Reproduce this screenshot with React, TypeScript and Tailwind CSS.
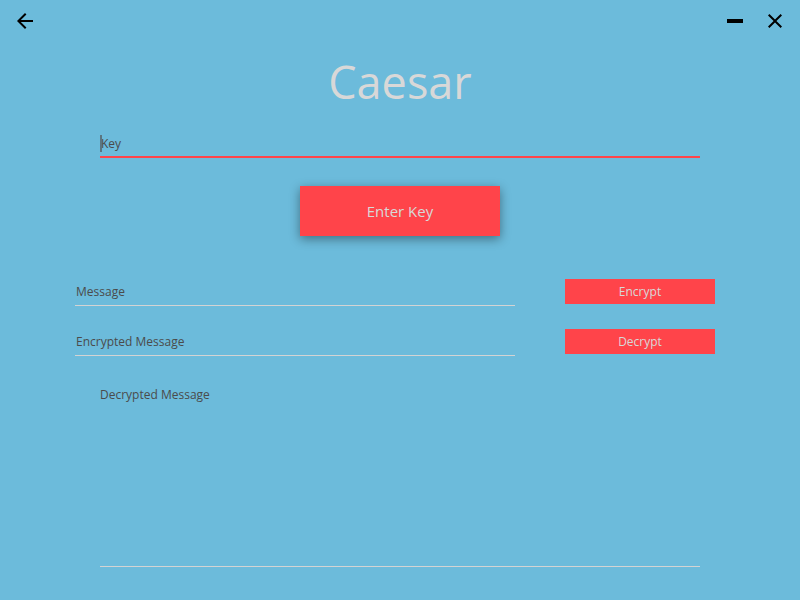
import React from "react";

type MessageRowProps = {
  id: string;
  label: string;
  action: string;
};

function MessageRow({ id, label, action }: MessageRowProps) {
  return (
    <div className="flex h-[27px] items-start gap-[50px]">
      <input
        id={id}
        type="text"
        aria-label={label}
        placeholder={label}
        className="h-[27px] min-w-0 flex-1 border-b border-[#d3d3d3] bg-transparent px-px pb-0.5 text-xs text-[#4b4b4b] outline-none placeholder:text-[#4b4b4b] placeholder:opacity-100"
      />
      <button
        type="button"
        className="h-[25px] w-[150px] bg-[#ff444a] text-xs text-[#d8d8d8]"
      >
        {action}
      </button>
    </div>
  );
}

export default function App() {
  return (
    <div className="flex min-h-screen flex-col bg-[#6cbbdb] font-['Open_Sans','Noto_Sans',sans-serif]">
      <header className="flex h-[42px] items-center justify-between px-[13px]">
        <button type="button" aria-label="Back" className="flex size-6 items-center justify-center">
          <svg viewBox="0 0 24 24" className="size-6" fill="#000">
            <path d="M20 11H7.83l5.59-5.59L12 4l-8 8 8 8 1.41-1.41L7.83 13H20v-2z" />
          </svg>
        </button>
        <div className="flex gap-4">
          <button type="button" aria-label="Minimize" className="flex size-6 items-center justify-center">
            <svg viewBox="0 0 24 24" className="size-6" fill="#000">
              <path d="M4 10h16v4H4z" />
            </svg>
          </button>
          <button type="button" aria-label="Close" className="flex size-6 items-center justify-center">
            <svg viewBox="0 0 24 24" className="size-6" fill="#000">
              <path d="M19 6.41L17.59 5 12 10.59 6.41 5 5 6.41 10.59 12 5 17.59 6.41 19 12 13.41 17.59 19 19 17.59 13.41 12z" />
            </svg>
          </button>
        </div>
      </header>

      <main className="flex flex-1 flex-col">
        <h1 className="text-center text-[45px] leading-20 text-[#d8d8d8]">Caesar</h1>

        <form className="flex flex-col items-center px-[100px] pt-[9px]">
          <div className="relative w-full">
            <span className="absolute top-1 left-0 h-[17px] w-0.5 bg-[#5b7681]" />
            <input
              id="key"
              type="text"
              aria-label="Key"
              placeholder="Key"
              className="block h-[27px] w-full border-b-2 border-[#ff444a] bg-transparent px-px text-xs text-[#4b4b4b] outline-none placeholder:text-[#4b4b4b] placeholder:opacity-100"
            />
          </div>
          <button
            type="button"
            className="mt-7 h-[50px] w-[200px] bg-[#ff444a] text-[15px] text-[#d8d8d8] shadow-[0_3px_10px_rgba(0,0,0,0.4)]"
          >
            Enter Key
          </button>
        </form>

        <section className="mt-[43px] mr-[85px] ml-[75px] flex flex-col gap-[23px]">
          <MessageRow id="message" label="Message" action="Encrypt" />
          <MessageRow id="encrypted" label="Encrypted Message" action="Decrypt" />
        </section>

        <div className="mx-[100px] mt-[29px] mb-[33px] flex flex-1 flex-col">
          <textarea
            id="decrypted"
            aria-label="Decrypted Message"
            placeholder="Decrypted Message"
            className="w-full flex-1 resize-none border-b border-[#d3d3d3] bg-transparent text-xs leading-5 text-[#4b4b4b] outline-none placeholder:text-[#4b4b4b] placeholder:opacity-100"
          />
        </div>
      </main>
    </div>
  );
}
